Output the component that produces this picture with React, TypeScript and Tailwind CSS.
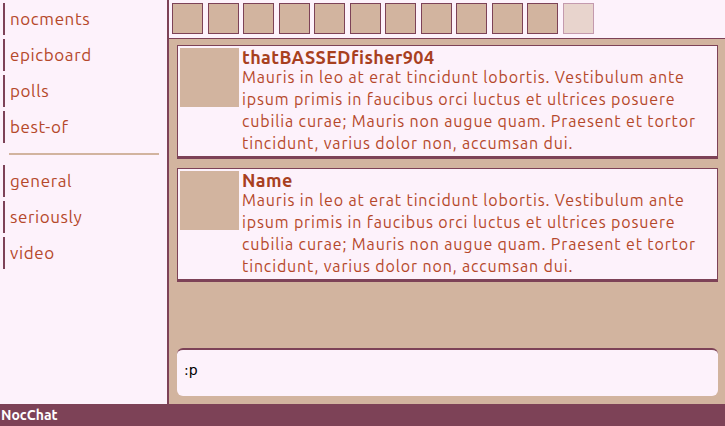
const navTop = ['nocments', 'epicboard', 'polls', 'best-of']
const navBottom = ['general', 'seriously', 'video']

const lorem =
  'Mauris in leo at erat tincidunt lobortis. Vestibulum ante ipsum primis in faucibus orci luctus et ultrices posuere cubilia curae; Mauris non augue quam. Praesent et tortor tincidunt, varius dolor non, accumsan dui.'

const messages = [
  { name: 'thatBASSEDfisher904', text: lorem },
  { name: 'Name', text: lorem },
]

const NavItem = ({ label }: { label: string }) => (
  <div className="flex h-[32px] items-center border-l-[2px] border-[#7d4257] pl-[5px] text-[17px] tracking-[0.6px] text-[#b5482a]">
    {label}
  </div>
)

export default function App() {
  return (
    <div
      className="flex h-[426px] w-[725px] flex-col bg-[#fdf2fb]"
      style={{ fontFamily: '"Ubuntu", "Open Sans", sans-serif' }}
    >
      <div className="flex min-h-0 flex-1">
        {/* sidebar */}
        <div className="flex w-[169px] flex-col gap-[4px] border-r-[2px] border-[#7d4257] pt-[3px] pl-[3px]">
          {navTop.map((n) => (
            <NavItem key={n} label={n} />
          ))}
          <div className="mx-[6px] my-[6px] h-[2px] w-[150px] bg-[#d2b49f]" />
          {navBottom.map((n) => (
            <NavItem key={n} label={n} />
          ))}
        </div>

        {/* main */}
        <div className="flex flex-1 flex-col bg-[#d2b49f]">
          <div className="flex h-[39px] gap-[4.5px] border-b border-[#7d4257] bg-[#fdf2fb] pt-[3px] pl-[3px]">
            {Array.from({ length: 11 }).map((_, i) => (
              <div key={i} className="h-[31px] w-[31px] border border-[#7d4257] bg-[#d2b49f]" />
            ))}
            <div className="h-[31px] w-[31px] border border-[#c49aae] bg-[#e8d4cd]" />
          </div>

          <div className="flex flex-1 flex-col gap-[9px] pt-[6px] pr-[7px] pl-[8px]">
            {messages.map((m, i) => (
              <div
                key={i}
                className="flex gap-[3px] border border-b-[3px] border-[#7d4257] bg-[#fdf2fb] p-[2px]"
              >
                <div className="h-[59px] w-[59px] shrink-0 bg-[#d2b49f]" />
                <div className="min-w-0 flex-1 text-[#b5482a]">
                  <div className="text-[18px] leading-[18px] font-bold tracking-[0.4px] text-[#a8401f]">
                    {m.name}
                  </div>
                  <div className="text-[16px] leading-[22px] tracking-[0.85px]">{m.text}</div>
                </div>
              </div>
            ))}
          </div>

          <div className="px-[7px] pb-[8px] pl-[8px]">
            <div
              className="h-[48px] rounded-[6px] border-t-[2px] border-[#7d4257] bg-[#fdf2fb] px-[7px] pt-[10px] text-[14px] text-black"
              style={{ fontFamily: '"DejaVu Sans", sans-serif' }}
            >
              :p
            </div>
          </div>
        </div>
      </div>

      <div className="flex h-[22px] items-center bg-[#7d4257] pl-[1px] text-[14px] font-bold text-white">
        NocChat
      </div>
    </div>
  )
}
